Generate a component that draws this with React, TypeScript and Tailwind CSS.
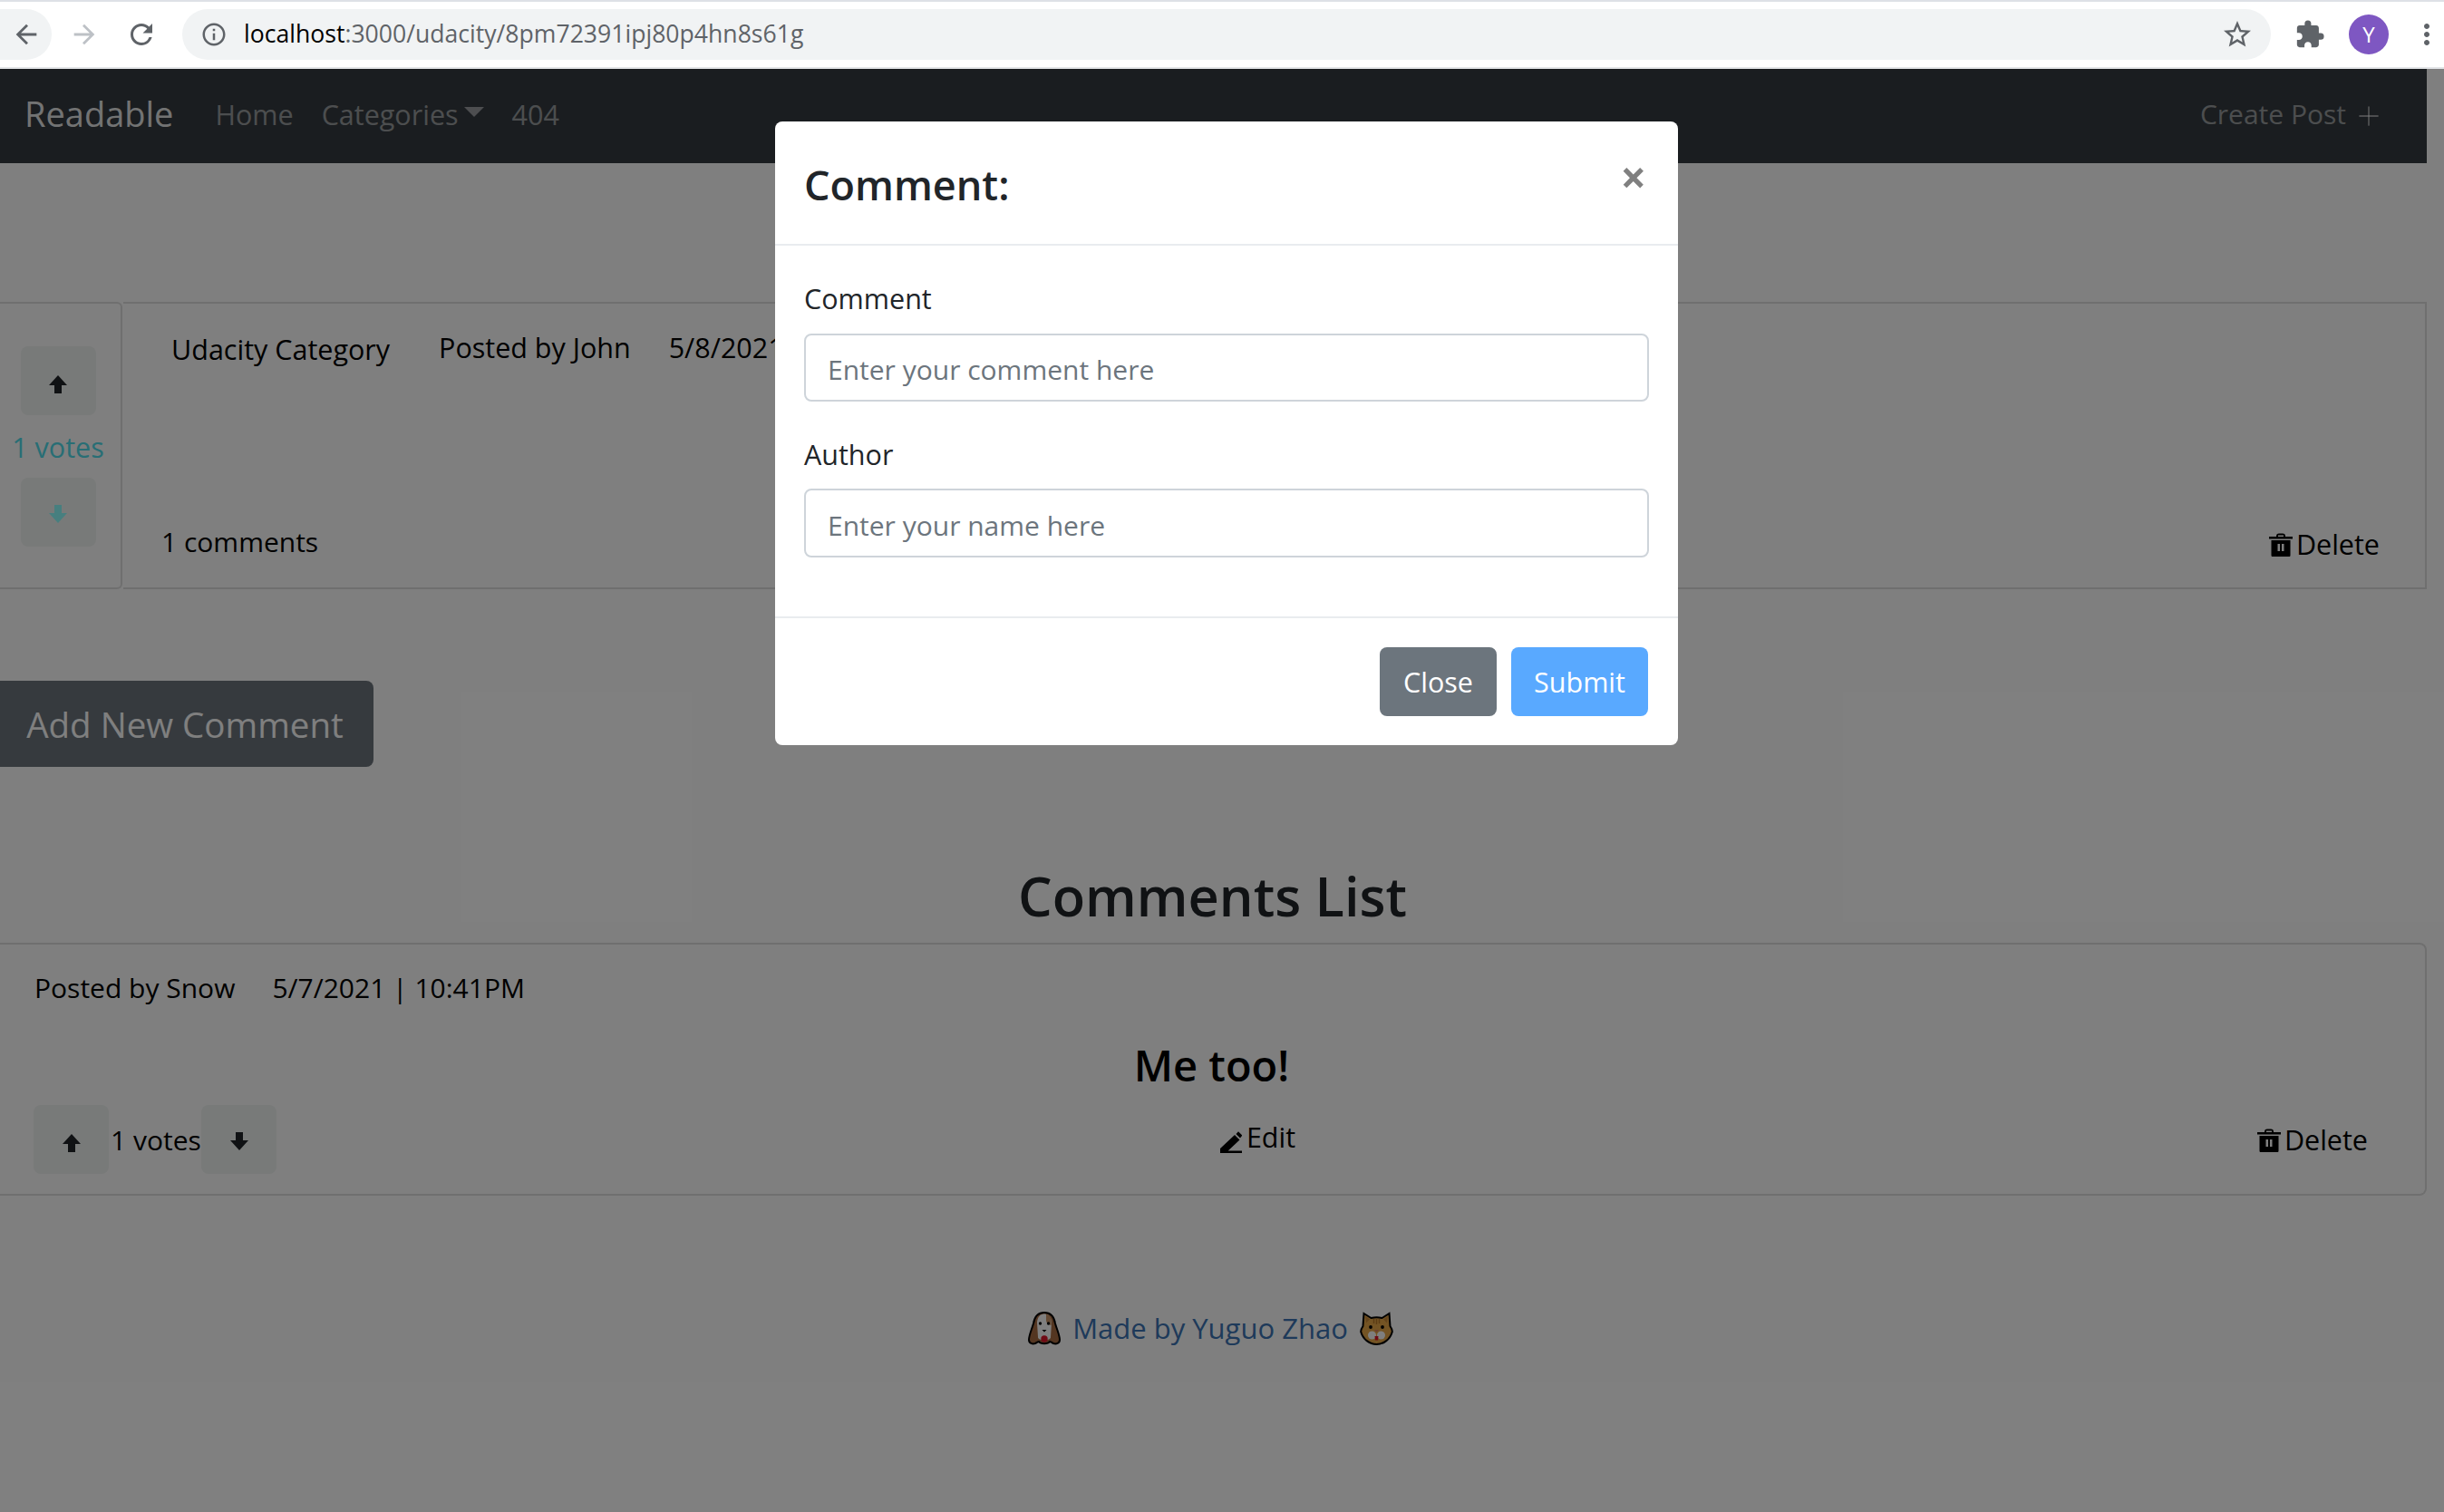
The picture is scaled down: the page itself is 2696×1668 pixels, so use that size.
import { Plus } from 'lucide-react'
import { MdArrowBack, MdArrowForward, MdExtension, MdInfoOutline, MdMoreVert, MdRefresh, MdStarBorder } from 'react-icons/md'

function ArrowIcon({ down, className }: { down?: boolean; className: string }) {
  return (
    <svg viewBox="0 0 20 20" className={className} fill="currentColor">
      <path d={down ? 'M6 0h8v9h6L10 20 0 9h6z' : 'M6 20h8v-9h6L10 0 0 11h6z'} />
    </svg>
  )
}

function TrashIcon() {
  return (
    <svg viewBox="0 0 26 26" className="h-[26px] w-[26px] shrink-0" fill="black">
      <path d="M8 3.500C8 1.500 9 .5 11 .5h4c2 0 3 1 3 3V4h8v2.500H0V4h8zM10 4h6v-1.500h-6zM2.500 8h21v16.500c0 1-.5 1.500-1.500 1.500H4c-1 0-1.500-.5-1.500-1.500zM9.500 12v8h2.500v-8zM14 12v8h2.500v-8z" fillRule="evenodd" />
    </svg>
  )
}

function EditIcon() {
  return (
    <svg viewBox="0 0 24 24" className="mt-[10px] h-[24px] w-[24px] shrink-0" fill="black">
      <path d="M0 21.500h24V24H0zM0 24v-5L16 4l5.500 5.500L6 24zM17.500 3L20 .3l4.300 4.200L22 7.500z" />
    </svg>
  )
}

function DeleteLink({ className }: { className: string }) {
  return (
    <div className={`flex items-center gap-[4px] text-black ${className}`}>
      <TrashIcon />
      <span>Delete</span>
    </div>
  )
}

function DogFace() {
  return (
    <svg viewBox="0 0 36 37" className="h-[37px] w-[36px] shrink-0">
      <path d="M18 1C10 1 7 7 6 13 4 20 1 26 1 31c0 4 4 5 7 4 2-1 3-2 4-2 2 3 10 3 12 0 1 0 2 1 4 2 3 1 7 0 7-4 0-5-3-11-5-18C29 7 26 1 18 1z" fill="#a86c42" stroke="#000" strokeWidth="2" />
      <path d="M18 2.500c-5 0-7.500 4-8 9l1 17c1 4 13 4 14 0l1-17c-.5-5-3-9-8-9z" fill="#fff" />
      <path d="M20 2.800c3 .5 5 3 5.500 6l.3 6c-3 0-5.500-2-5.800-5z" fill="#c89468" />
      <circle cx="13.500" cy="13" r="1.700" fill="#000" />
      <circle cx="22.500" cy="13" r="1.700" fill="#000" />
      <path d="M15.500 20h5L18 22.500z" fill="#000" />
      <circle cx="18" cy="30" r="3.700" fill="#e0142a" />
    </svg>
  )
}

function CatFace() {
  return (
    <svg viewBox="0 0 36 37" className="h-[37px] w-[37px] shrink-0">
      <path d="M4 2l8 5c4-1 8-1 12 0l8-5 1 14c2 3 3 5 2 7-2 7-9 13-17 13S3 30 1 23c-1-2 0-4 2-7z" fill="#e8a848" stroke="#000" strokeWidth="2" />
      <path d="M5.500 5l5 3.500-4 4zM30.500 5l-5 3.500 4 4z" fill="#c88838" />
      <path d="M15 8v5M18 8v6M21 8v5" stroke="#b87828" strokeWidth="1.500" />
      <circle cx="11.500" cy="17" r="1.900" fill="#000" />
      <circle cx="24.500" cy="17" r="1.900" fill="#000" />
      <circle cx="13" cy="26" r="4.500" fill="#fff" />
      <circle cx="23" cy="26" r="4.500" fill="#fff" />
      <path d="M15.500 20h5L18 23z" fill="#d88060" />
      <path d="M16 27h4l-.5 4.500h-3z" fill="#e0142a" />
    </svg>
  )
}

function BrowserBar() {
  return (
    <div className="flex h-[76px] items-center border-t-2 border-b-2 border-t-[#dee1e6] border-b-[#e3e5e8] bg-white">
      <div className="flex h-[56px] w-[57px] items-center justify-center rounded-r-full bg-[#f1f3f4]">
        <MdArrowBack className="h-[34px] w-[34px] text-[#5f6368]" />
      </div>
      <MdArrowForward className="ml-[19px] h-[34px] w-[34px] text-[#bdc1c6]" />
      <MdRefresh className="ml-[28px] h-[36px] w-[36px] text-[#5f6368]" />
      <div className="ml-[27px] flex h-[56px] w-[2304px] items-center rounded-full bg-[#f1f3f4] pr-[19px] pl-[20px]">
        <MdInfoOutline className="h-[30px] w-[30px] text-[#5f6368]" />
        <div className="ml-[18px] text-[26.6px] text-[#5f6368]">
          <span className="text-black">localhost</span>:3000/udacity/8pm72391ipj80p4hn8s61g
        </div>
        <MdStarBorder className="ml-auto h-[36px] w-[36px] text-[#5f6368]" />
      </div>
      <MdExtension className="ml-[26px] h-[34px] w-[34px] text-[#5f6368]" />
      <div className="ml-[26px] flex h-[44px] w-[44px] items-center justify-center rounded-full bg-[#7e57c2] text-[24px] text-white">Y</div>
      <MdMoreVert className="ml-[24px] h-[36px] w-[36px] shrink-0 text-[#5f6368]" />
    </div>
  )
}

function NavBar() {
  return (
    <nav className="flex h-[104px] items-center justify-between bg-[#343a40] pr-[47px] pl-[27px]">
      <div className="flex items-center pb-[3px] text-[rgba(255,255,255,0.5)]">
        <span className="mb-[2px] text-[38px] text-[rgba(255,255,255,0.9)]">Readable</span>
        <span className="ml-[46px]">Home</span>
        <span className="ml-[31px]">Categories</span>
        <span className="mt-[-6px] ml-[6px] h-0 w-0 border-x-[11px] border-t-[11px] border-x-transparent border-t-[rgba(255,255,255,0.5)]" />
        <span className="ml-[31px]">404</span>
      </div>
      <div className="flex items-center text-[30px] text-[rgba(255,255,255,0.5)]">
        <span className="mb-[6px]">Create Post</span>
        <Plus className="ml-[8px] h-[34px] w-[34px]" strokeWidth={1.3} />
      </div>
    </nav>
  )
}

function PostRow() {
  return (
    <div className="mt-[153px] flex h-[317px] text-black">
      <div className="flex w-[135px] flex-col items-center rounded-r-[6px] border-2 border-l-0 border-[#dfdfdf] pt-[47px] pr-[5px]">
        <div className="flex h-[76px] w-[83px] items-center justify-center rounded-[8px] bg-[#f0f4f2] pt-[7px] text-[#212529]">
          <ArrowIcon className="h-[20px] w-[20px]" />
        </div>
        <div className="my-[14px] pt-[1px] leading-[40px] text-[#50dcea]">1 votes</div>
        <div className="flex h-[76px] w-[83px] items-center justify-center rounded-[8px] bg-[#f0f4f2] pt-[3px] text-[#8fffff]">
          <ArrowIcon down className="h-[20px] w-[20px]" />
        </div>
      </div>
      <div className="ml-px flex flex-1 flex-col border-2 border-l-0 border-[#dfdfdf] pt-[27px] pr-[50px] pl-[42px]">
        <div className="flex leading-[42px]">
          <span className="ml-[11px] pt-[2px]">Udacity Category</span>
          <span className="ml-[54px]">Posted by John</span>
          <span className="ml-[42px]">5/8/2021</span>
        </div>
        <div className="mt-auto mb-[26px] flex items-end justify-between">
          <span className="mb-[3px] text-[30px] leading-[42px]">1 comments</span>
          <DeleteLink className="mb-[-2px]" />
        </div>
      </div>
    </div>
  )
}

function CommentCard() {
  return (
    <div className="flex h-[279px] flex-col rounded-r-[8px] border-2 border-l-0 border-[#dfdfdf] pr-[63px] pl-[37px] text-black">
      <div className="mt-[27px] flex leading-[42px]">
        <span className="ml-[1px] text-[30px]">Posted by Snow</span>
        <span className="ml-[41px] text-[30px]">5/7/2021 | 10:41PM</span>
      </div>
      <h4 className="mt-[32px] mr-[-61px] ml-[-37px] text-center text-[47px] leading-[64px] font-semibold">Me too!</h4>
      <div className="mt-[12px] grid grid-cols-3 items-center">
        <div className="flex items-center">
          <div className="flex h-[76px] w-[83px] items-center justify-center rounded-[8px] bg-[#f0f4f2] pt-[8px] text-[#212529]">
            <ArrowIcon className="h-[20px] w-[20px]" />
          </div>
          <span className="mx-[2px] w-[98px] text-center text-[30px] whitespace-nowrap">1 votes</span>
          <div className="flex h-[76px] w-[83px] items-center justify-center rounded-[8px] bg-[#f0f4f2] pt-[4px] text-[#212529]">
            <ArrowIcon down className="h-[20px] w-[20px]" />
          </div>
        </div>
        <div className="flex items-center justify-center pb-[4px] pl-[126px]">
          <EditIcon />
          <span className="ml-[5px]">Edit</span>
        </div>
        <DeleteLink className="mt-[2px] justify-end" />
      </div>
    </div>
  )
}

function CommentModal() {
  return (
    <div className="absolute top-[134px] left-[855px] flex h-[688px] w-[996px] flex-col rounded-[8px] bg-white text-[#212529]">
      <div className="flex h-[137px] items-start justify-between border-b-2 border-[#e9ecef] pt-[40px] pr-[35px] pl-[32px]">
        <h5 className="text-[45px] leading-[60px] font-semibold">Comment:</h5>
        <span className="mt-[-9px] text-[50px] leading-[60px] font-bold text-[#808080]">×</span>
      </div>
      <div className="flex-1 px-[32px] pt-[34px]">
        <div className="leading-[48px]">Comment</div>
        <input
          readOnly
          placeholder="Enter your comment here"
          className="mt-[15px] block h-[75px] w-full rounded-[8px] border-2 border-[#ced4da] px-[24px] pt-[4px] text-[30px] outline-none placeholder:text-[#6c757d]"
        />
        <div className="mt-[34px] leading-[48px]">Author</div>
        <input
          readOnly
          placeholder="Enter your name here"
          className="mt-[14px] block h-[76px] w-full rounded-[8px] border-2 border-[#ced4da] px-[24px] pt-[4px] text-[30px] outline-none placeholder:text-[#6c757d]"
        />
      </div>
      <div className="flex h-[142px] items-start justify-end gap-[16px] border-t-2 border-[#e9ecef] pt-[32px] pr-[33px]">
        <button className="h-[76px] w-[129px] rounded-[8px] bg-[#6c757d] pt-[2px] text-white">Close</button>
        <button className="h-[76px] w-[151px] rounded-[8px] bg-[#59a9ff] pt-[2px] text-white">Submit</button>
      </div>
    </div>
  )
}

export default function App() {
  return (
    <div className="relative h-[1668px] overflow-hidden bg-white font-['Open_Sans',sans-serif] text-[30.5px]">
      <BrowserBar />
      <div className="w-[2677px]">
        <NavBar />
        <PostRow />
        <button className="mt-[101px] block h-[95px] w-[412px] rounded-r-[8px] bg-[#6c757d] pt-[2px] pr-[4px] text-[38.5px] text-white">Add New Comment</button>
        <h2 className="mt-[104px] pr-[2px] text-center text-[59.5px] leading-[76px] font-semibold text-[#212529]">Comments List</h2>
        <div className="mt-[14px]">
          <CommentCard />
        </div>
        <div className="mt-[123px] flex items-center justify-center gap-[13px] pr-[6px] text-[31px] text-[#3c74b4]">
          <DogFace />
          <span>Made by Yuguo Zhao</span>
          <CatFace />
        </div>
      </div>
      {/* modal backdrop, the browser bar stays undimmed */}
      <div className="absolute inset-x-0 top-[76px] bottom-0 bg-black/50" />
      <CommentModal />
    </div>
  )
}
